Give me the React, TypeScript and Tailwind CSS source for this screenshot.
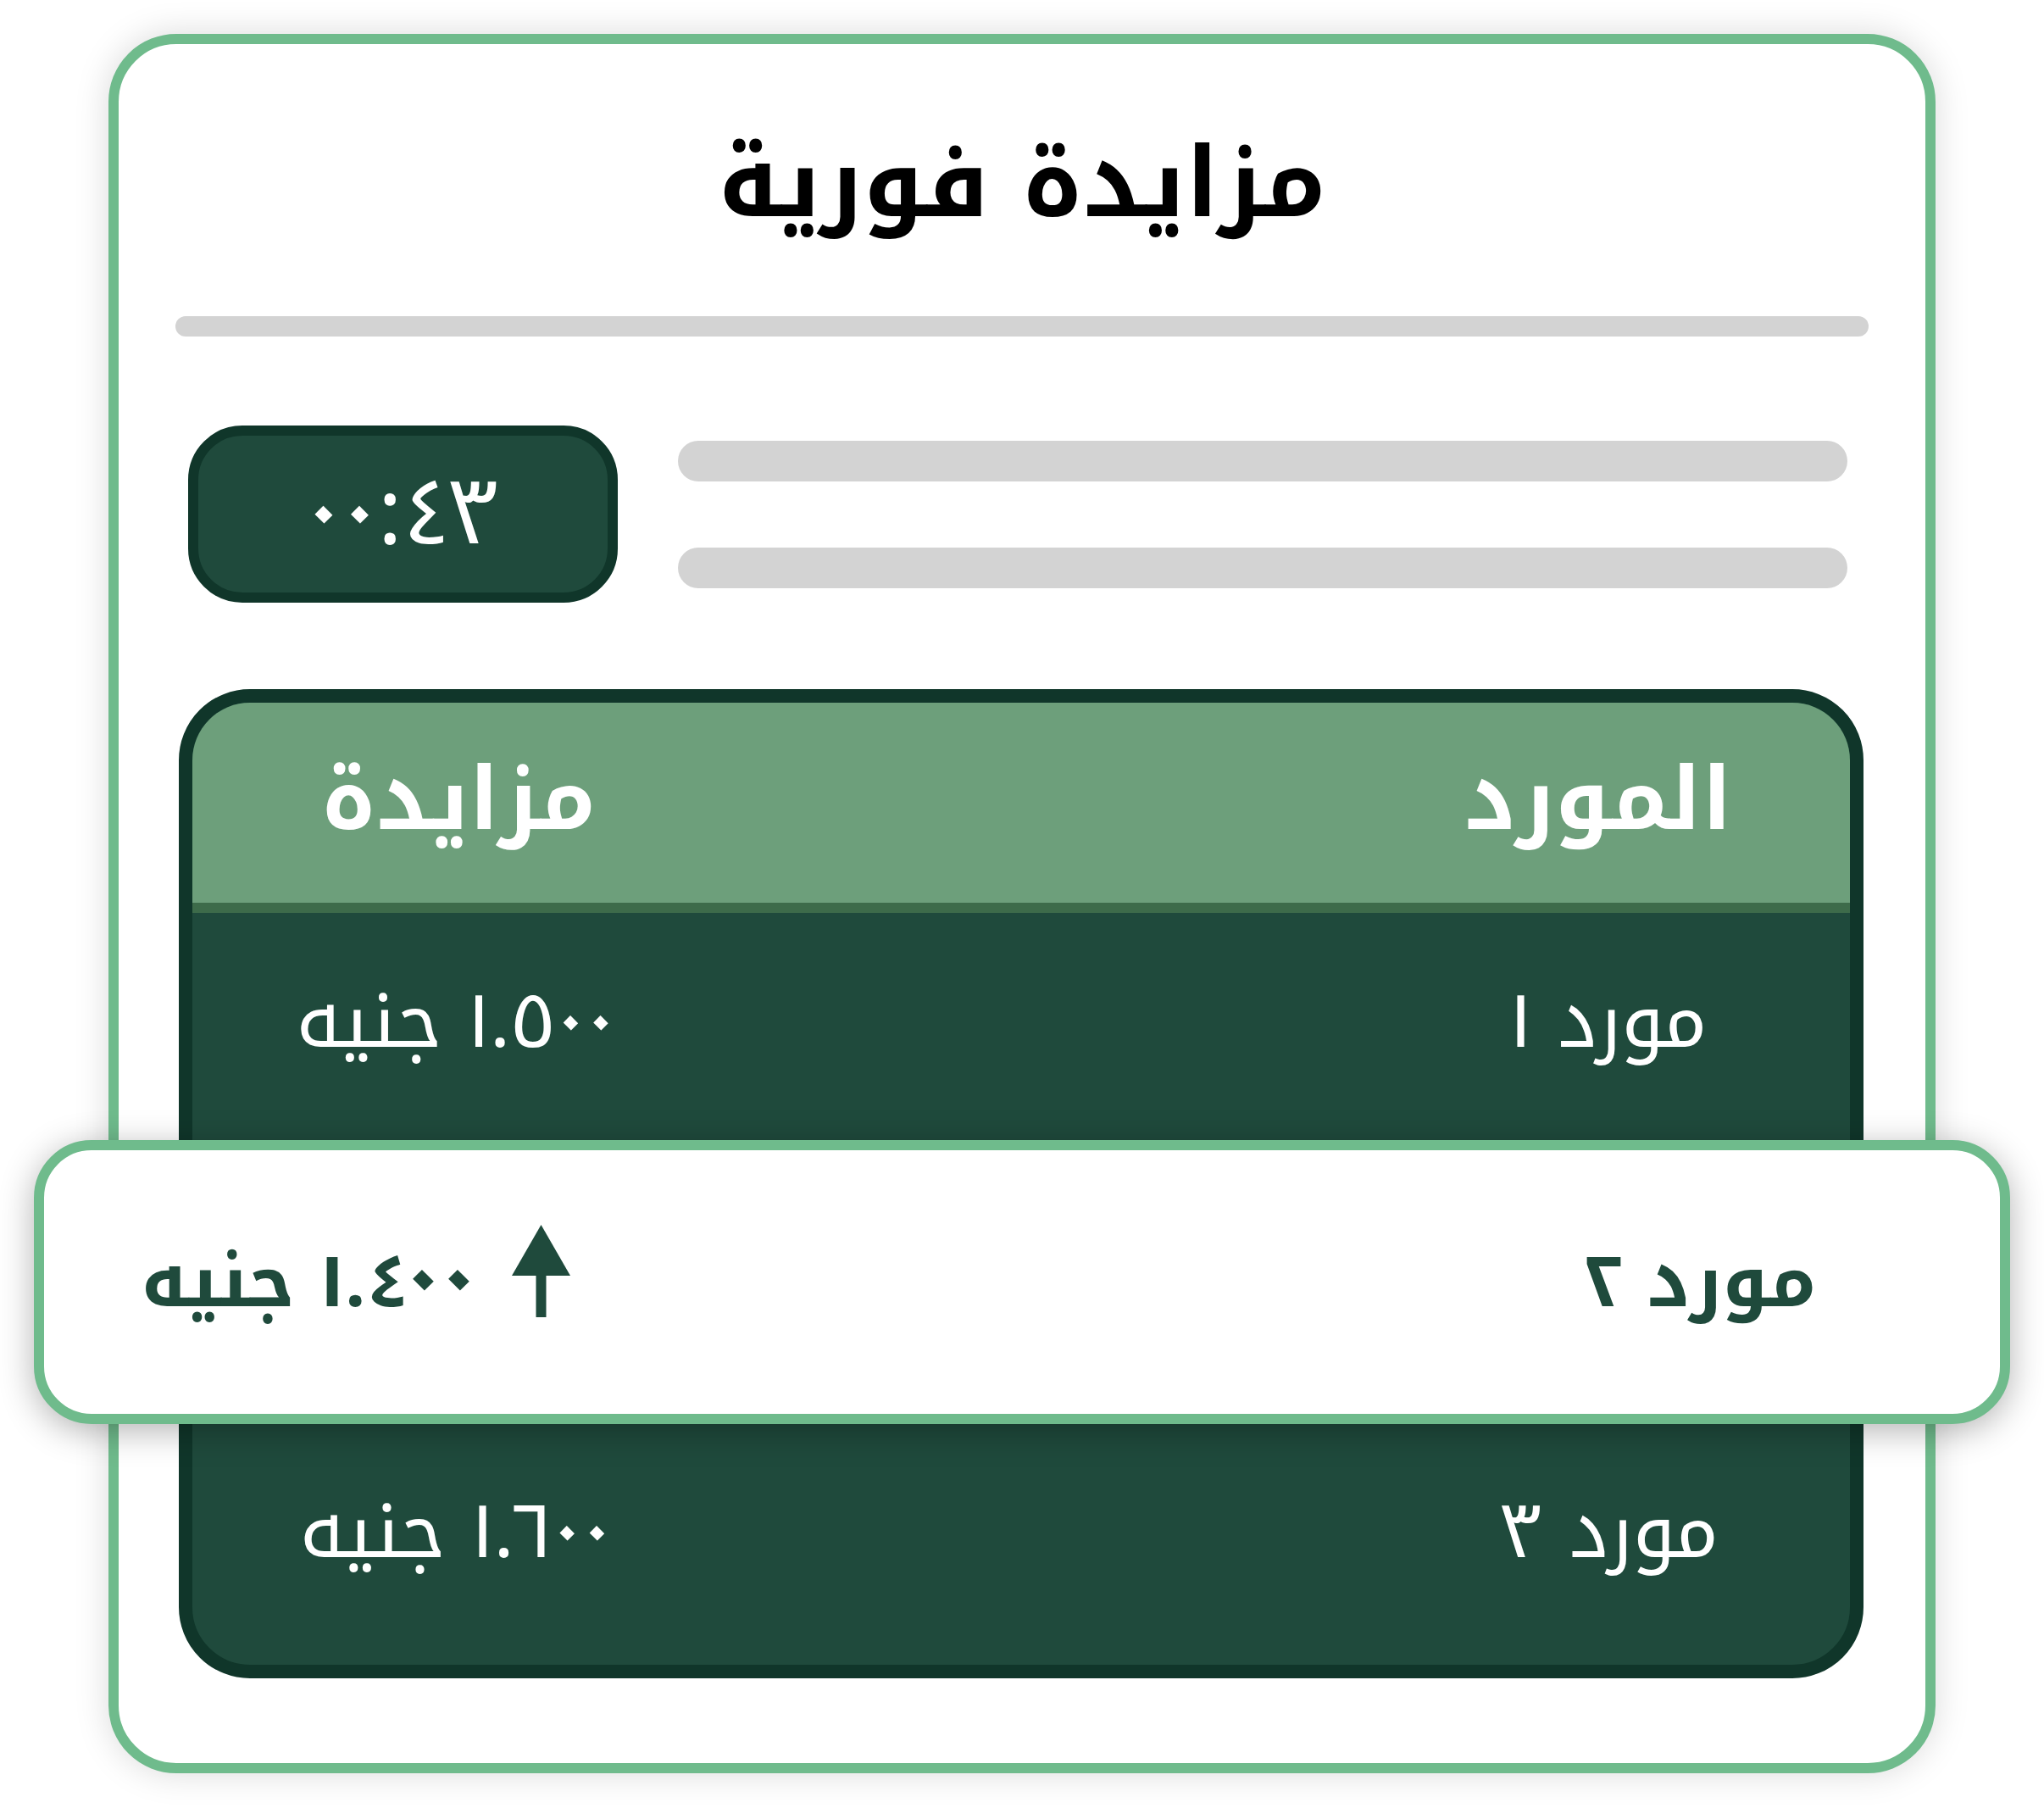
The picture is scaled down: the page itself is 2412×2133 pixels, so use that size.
export default function App() {
  return (
    <div className="w-[2412px] h-[2133px] bg-white pt-[40px] font-['Noto_Kufi_Arabic','Noto_Sans_Arabic',sans-serif] proportional-nums">
      <div className="mx-auto w-[2156px] h-[2052px] border-[12px] border-[#6fbb8c] rounded-[80px] bg-white shadow-[0_0_40px_rgba(0,0,0,0.15)] flex flex-col">
        <h1 dir="rtl" className="mt-[108px] text-center text-[114px] leading-none font-bold text-black">
          مزايدة فورية
        </h1>
        <div className="mt-[99px] mx-[67px] h-[24px] rounded-full bg-[#d3d3d3]" />
        <div className="mt-[105px] flex items-center ml-[82px] mr-[92px]">
          <div className="w-[507px] h-[209px] pb-[4px] rounded-[64px] border-[12px] border-[#10362a] bg-[#1f4a3c] flex items-center justify-center text-white text-[108px] leading-none">
            ٠٠:٤٣
          </div>
          <div className="ml-[71px] flex-1 flex flex-col gap-[78px]">
            <div className="h-[48px] rounded-full bg-[#d3d3d3]" />
            <div className="h-[48px] rounded-full bg-[#d3d3d3]" />
          </div>
        </div>
        <div className="mt-[102px] ml-[71px] w-[1988px] border-[16px] border-[#10362a] rounded-[84px] bg-[#1f4a3c] flex flex-col">
          <div className="h-[248px] pb-[8px] rounded-t-[68px] bg-[#6d9f7b] border-b-[12px] border-[#3d6b4a] flex items-center justify-between text-white font-bold text-[103px] leading-none">
            <div dir="rtl" className="w-[628px] text-center">مزايدة</div>
            <div dir="rtl" className="w-[594px] text-center">المورد</div>
          </div>
          <div className="h-[268px] pb-[12px] flex items-center justify-between text-white text-[90px] leading-none">
            <div dir="rtl" className="w-[622px] text-center">١.٥٠٠ جنيه</div>
            <div dir="rtl" className="w-[570px] text-center">مورد ١</div>
          </div>
          <div className="relative z-10 -ml-[187px] -mr-[189px] h-[335px] rounded-[68px] border-[12px] border-[#6fbb8c] bg-white shadow-[0_8px_40px_rgba(0,0,0,0.3)] flex items-center justify-between text-[#1f4a3c] font-bold text-[86px] leading-none">
            <div className="w-[736px] flex items-center justify-center">
              <span dir="rtl">١.٤٠٠ جنيه</span>
              <svg className="ml-[42px] mb-[26px]" width="69" height="109" viewBox="0 0 69 109">
                <polygon points="34.5,0 0,60 69,60" fill="#1f4a3c" />
                <rect x="28.5" y="59" width="12" height="50" fill="#1f4a3c" />
              </svg>
            </div>
            <div dir="rtl" className="w-[708px] text-center">مورد ٢</div>
          </div>
          <div className="h-[284px] pb-[30px] flex items-center justify-between text-white text-[90px] leading-none">
            <div dir="rtl" className="w-[622px] text-center">١.٦٠٠ جنيه</div>
            <div dir="rtl" className="w-[570px] text-center">مورد ٣</div>
          </div>
        </div>
      </div>
    </div>
  );
}
